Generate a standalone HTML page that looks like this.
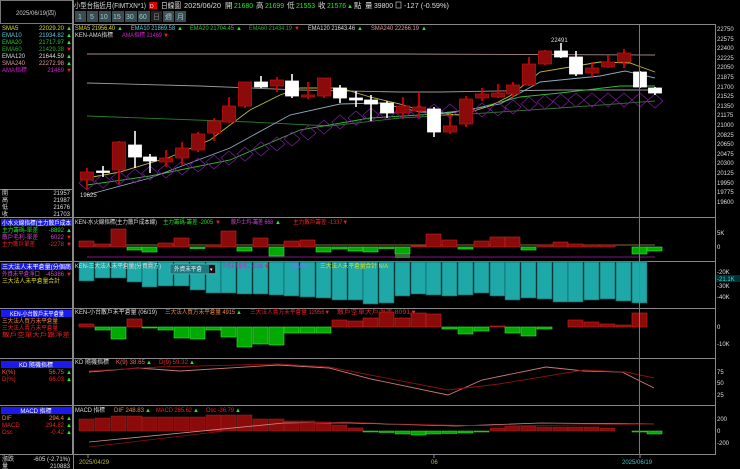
<!DOCTYPE html>
<html><head><meta charset="utf-8"><style>
html,body{margin:0;padding:0;background:#000;width:740px;height:469px;overflow:hidden}
svg{display:block}
text{font-family:"Liberation Sans","Noto Sans CJK TC",sans-serif}
.s{font-size:6px}.m{font-size:7px}.h{font-size:7.5px}
</style></head><body>
<svg width="740" height="469" viewBox="0 0 740 469" xmlns="http://www.w3.org/2000/svg">
<rect width="740" height="469" fill="#000"/>
<!-- top header -->
<rect x="0.5" y="0.5" width="72" height="23" fill="none" stroke="#777"/>
<text x="36" y="15" class="s" fill="#ccc" text-anchor="middle">2025/06/19(四)</text>
<g lengthAdjust="spacingAndGlyphs">
<text x="74" y="8" class="h" fill="#ddd" textLength="72" lengthAdjust="spacingAndGlyphs">小型台指近月(FIMTXN*1)</text>
<rect x="149" y="2" width="8" height="7" fill="#d00"/><text x="150" y="8" style="font-size:5px" fill="#fff">D</text>
<text x="161" y="8" class="h" fill="#ddd" textLength="20" lengthAdjust="spacingAndGlyphs">日線圖</text>
<text x="184" y="8" class="h" fill="#ddd" textLength="37" lengthAdjust="spacingAndGlyphs">2025/06/20</text>
<text x="225" y="8" class="h" fill="#ddd">開</text><text x="234" y="8" class="h" fill="#2e2" textLength="19" lengthAdjust="spacingAndGlyphs">21680</text>
<text x="256" y="8" class="h" fill="#ddd">高</text><text x="265" y="8" class="h" fill="#2e2" textLength="19" lengthAdjust="spacingAndGlyphs">21699</text>
<text x="287" y="8" class="h" fill="#ddd">低</text><text x="296" y="8" class="h" fill="#2e2" textLength="19" lengthAdjust="spacingAndGlyphs">21553</text>
<text x="318" y="8" class="h" fill="#ddd">收</text><text x="327" y="8" class="h" fill="#2e2" textLength="19" lengthAdjust="spacingAndGlyphs">21576</text>
<text x="347" y="8" class="s" fill="#2e2">▲</text>
<text x="354" y="8" class="h" fill="#ddd">點</text>
<text x="365" y="8" class="h" fill="#ddd">量</text><text x="374" y="8" class="h" fill="#ddd" textLength="19" lengthAdjust="spacingAndGlyphs">39800</text>
<rect x="396" y="2" width="5" height="6" fill="none" stroke="#ddd" stroke-width="0.6"/>
<text x="404" y="8" class="h" fill="#ddd" textLength="45" lengthAdjust="spacingAndGlyphs">-127 (-0.59%)</text>
</g>
<g class="m" fill="#9cc">
<rect x="75" y="11" width="11" height="11" fill="#3b4b52"/><text x="78" y="19">1</text>
<rect x="87" y="11" width="11" height="11" fill="#3b4b52"/><text x="90" y="19">5</text>
<rect x="99" y="11" width="12" height="11" fill="#3b4b52"/><text x="100" y="19">10</text>
<rect x="112" y="11" width="12" height="11" fill="#3b4b52"/><text x="113" y="19">15</text>
<rect x="125" y="11" width="12" height="11" fill="#3b4b52"/><text x="126" y="19">30</text>
<rect x="138" y="11" width="12" height="11" fill="#3b4b52"/><text x="139" y="19">60</text>
<rect x="151" y="11" width="11" height="11" fill="#222"/><text x="153" y="19" fill="#888">日</text>
<rect x="163" y="11" width="11" height="11" fill="#3b4b52"/><text x="165" y="19">週</text>
<rect x="175" y="11" width="11" height="11" fill="#3b4b52"/><text x="177" y="19">月</text>
</g>
<!-- frame lines -->
<g stroke="#888" stroke-width="1">
<line x1="73" y1="24.5" x2="715" y2="24.5"/>
<line x1="0" y1="217.5" x2="715" y2="217.5"/>
<line x1="0" y1="261.5" x2="715" y2="261.5"/>
<line x1="0" y1="308.5" x2="715" y2="308.5"/>
<line x1="0" y1="358.5" x2="715" y2="358.5"/>
<line x1="0" y1="405.5" x2="715" y2="405.5"/>
<line x1="0" y1="454.5" x2="715" y2="454.5"/>
<line x1="73.5" y1="0" x2="73.5" y2="469"/>
<line x1="715.5" y1="24" x2="715.5" y2="455"/>
<line x1="72.5" y1="0" x2="72.5" y2="455"/>
<line x1="0" y1="189.5" x2="72" y2="189.5"/>
</g>
<!-- left panel values -->
<g class="s">
<text x="2" y="30" fill="#dd2">SMA5</text><text x="64" y="30" fill="#dd2" text-anchor="end">22029.20</text><text x="66" y="30" fill="#2e2">▲</text>
<text x="2" y="37" fill="#5cd">EMA10</text><text x="64" y="37" fill="#5cd" text-anchor="end">21934.82</text><text x="66" y="37" fill="#2e2">▲</text>
<text x="2" y="44" fill="#2c2">EMA20</text><text x="64" y="44" fill="#2c2" text-anchor="end">21717.97</text><text x="66" y="44" fill="#2e2">▲</text>
<text x="2" y="51" fill="#2a2">EMA60</text><text x="64" y="51" fill="#2a2" text-anchor="end">21429.38</text><text x="66" y="51" fill="#e22">▼</text>
<text x="2" y="58" fill="#ddd">EMA120</text><text x="64" y="58" fill="#ddd" text-anchor="end">21644.59</text><text x="66" y="58" fill="#2e2">▲</text>
<text x="2" y="65" fill="#d99">SMA240</text><text x="64" y="65" fill="#d99" text-anchor="end">22272.98</text><text x="66" y="65" fill="#2e2">▲</text>
<text x="2" y="72" fill="#c2c">AMA指標</text><text x="64" y="72" fill="#c2c" text-anchor="end">21469</text><text x="66" y="72" fill="#e22">▼</text>
<g fill="#ddd"><text x="2" y="195">開</text><text x="70" y="195" text-anchor="end">21957</text>
<text x="2" y="202">高</text><text x="70" y="202" text-anchor="end">21987</text>
<text x="2" y="209">低</text><text x="70" y="209" text-anchor="end">21676</text>
<text x="2" y="216">收</text><text x="70" y="216" text-anchor="end">21703</text></g>
<rect x="1" y="219" width="71" height="7" fill="#1a1aee"/><text x="2" y="225" fill="#fff" textLength="69" lengthAdjust="spacingAndGlyphs">小水火線指標(主力散戶成本</text>
<text x="2" y="232" fill="#2d2" textLength="36" lengthAdjust="spacingAndGlyphs">主力籌碼-單差</text><text x="64" y="232" fill="#2d2" text-anchor="end">-8892</text><text x="66" y="232" fill="#2e2">▲</text>
<text x="2" y="239" fill="#c4c" textLength="36" lengthAdjust="spacingAndGlyphs">散戶毛利-單差</text><text x="64" y="239" fill="#c4c" text-anchor="end">6022</text><text x="66" y="239" fill="#e22">▼</text>
<text x="2" y="246" fill="#e22" textLength="33" lengthAdjust="spacingAndGlyphs">主力散戶單差</text><text x="64" y="246" fill="#e22" text-anchor="end">-2278</text><text x="66" y="246" fill="#e22">▼</text>
<rect x="1" y="263" width="71" height="7" fill="#1a1aee"/><text x="2" y="269" fill="#fff" textLength="69" lengthAdjust="spacingAndGlyphs">三大法人未平倉量(分個商</text>
<text x="2" y="276" fill="#c4c" textLength="38" lengthAdjust="spacingAndGlyphs">外資未平倉淨口</text><text x="64" y="276" fill="#c4c" text-anchor="end">-45386</text><text x="66" y="276" fill="#e22">▼</text>
<text x="2" y="283" fill="#dd2" textLength="58" lengthAdjust="spacingAndGlyphs">三大法人未平倉量合計</text>
<rect x="1" y="310" width="71" height="7" fill="#1a1aee"/><text x="10" y="316" fill="#fff" textLength="54" lengthAdjust="spacingAndGlyphs">KEN-小台散戶未平倉量</text>
<text x="2" y="323" fill="#e84" textLength="56" lengthAdjust="spacingAndGlyphs">三大法人買方未平倉量</text>
<text x="2" y="330" fill="#e22" textLength="56" lengthAdjust="spacingAndGlyphs">三大法人賣方未平倉量</text>
<text x="2" y="337" fill="#e22" textLength="68" lengthAdjust="spacingAndGlyphs">散戶空單大戶跟淨差</text>
<rect x="1" y="361" width="71" height="7" fill="#1a1aee"/><text x="36" y="367" fill="#fff" text-anchor="middle">KD 隨機指標</text>
<text x="2" y="374" fill="#e55">K(%)</text><text x="64" y="374" fill="#e55" text-anchor="end">56.75</text><text x="66" y="374" fill="#2e2">▲</text>
<text x="2" y="381" fill="#e22">D(%)</text><text x="64" y="381" fill="#e22" text-anchor="end">66.03</text><text x="66" y="381" fill="#2e2">▲</text>
<rect x="1" y="407" width="71" height="7" fill="#1a1aee"/><text x="36" y="413" fill="#fff" text-anchor="middle">MACD 指標</text>
<text x="2" y="420" fill="#e84">DIF</text><text x="64" y="420" fill="#e84" text-anchor="end">294.4</text><text x="66" y="420" fill="#2e2">▲</text>
<text x="2" y="427" fill="#e22">MACD</text><text x="64" y="427" fill="#e22" text-anchor="end">294.82</text><text x="66" y="427" fill="#2e2">▲</text>
<text x="2" y="434" fill="#e22">Osc</text><text x="64" y="434" fill="#e22" text-anchor="end">-0.42</text><text x="66" y="434" fill="#2e2">▲</text>
<text x="2" y="461" fill="#ddd">漲跌</text><text x="70" y="461" fill="#ddd" text-anchor="end">-605 (-2.71%)</text>
<text x="2" y="468" fill="#ddd">量</text><text x="70" y="468" fill="#ddd" text-anchor="end">210883</text>
</g>
<!-- main chart titles -->
<g class="s">
<text x="75" y="30" fill="#dd2" textLength="40" lengthAdjust="spacingAndGlyphs">SMA5 21956.40</text><text x="117" y="30" fill="#2e2">▲</text>
<text x="131" y="30" fill="#5cd" textLength="44" lengthAdjust="spacingAndGlyphs">EMA10 21869.58</text><text x="177" y="30" fill="#2e2">▲</text>
<text x="190" y="30" fill="#2c2" textLength="44" lengthAdjust="spacingAndGlyphs">EMA20 21704.45</text><text x="236" y="30" fill="#2e2">▲</text>
<text x="249" y="30" fill="#2a2" textLength="43" lengthAdjust="spacingAndGlyphs">EMA60 21434.19</text><text x="294" y="30" fill="#e22">▼</text>
<text x="308" y="30" fill="#ddd" textLength="47" lengthAdjust="spacingAndGlyphs">EMA120 21643.46</text><text x="357" y="30" fill="#2e2">▲</text>
<text x="371" y="30" fill="#d99" textLength="48" lengthAdjust="spacingAndGlyphs">SMA240 22266.19</text><text x="421" y="30" fill="#2e2">▲</text>
<text x="75" y="37" fill="#ddd" textLength="38" lengthAdjust="spacingAndGlyphs">KEN-AMA指標</text>
<text x="122" y="37" fill="#c2c" textLength="40" lengthAdjust="spacingAndGlyphs">AMA指標 21469</text><text x="163" y="37" fill="#e22">▼</text>
</g>
<!-- price axis -->
<g class="s" fill="#ddd">
<text x="717" y="31">22750</text><text x="717" y="41">22575</text><text x="717" y="50">22400</text><text x="717" y="60">22225</text><text x="717" y="69">22050</text><text x="717" y="79">21875</text><text x="717" y="89">21700</text><text x="717" y="98">21525</text><text x="717" y="108">21350</text><text x="717" y="117">21175</text><text x="717" y="127">21000</text><text x="717" y="137">20825</text><text x="717" y="146">20650</text><text x="717" y="156">20475</text><text x="717" y="165">20300</text><text x="717" y="175">20125</text><text x="717" y="185">19950</text><text x="717" y="194">19775</text><text x="717" y="204">19600</text>
<text x="717" y="235">5K</text><text x="717" y="249">0</text>
<text x="717" y="274">-20K</text>
<text x="717" y="288">-30K</text><text x="717" y="299">-40K</text>
<text x="717" y="329">0</text><text x="717" y="346">-10K</text>
<text x="717" y="374">75</text><text x="717" y="385">50</text><text x="717" y="397">25</text>
<text x="717" y="421">200</text><text x="717" y="433">0</text><text x="717" y="445">-200</text>
</g>
<rect x="716" y="275" width="24" height="7" fill="#033"/><text x="717" y="281" class="s" fill="#3dd">-21.1K</text>
<!-- MA lines -->
<g fill="none" stroke-width="0.9">
<polyline stroke="#a88" points="87,54 300,54 400,54 655,55"/>
<polyline stroke="#999" points="87,83 200,86 300,90 400,92 440,92 560,90 655,90"/>
<polyline stroke="#2a7a2a" points="87,116 250,122 330,126 400,118 470,114 560,108 655,101"/>
<polyline stroke="#3b3" points="87,185 150,176 230,160 300,130 370,118 420,115 470,110 520,97 560,93 620,86 655,86"/>
<polyline stroke="#8ab" points="87,195 150,178 230,148 290,115 340,104 380,103 420,112 450,113 500,104 540,82 600,76 625,71 655,78"/>
<polyline stroke="#bb3" points="87,178 120,172 170,157 210,140 250,110 280,95 300,88 340,88 370,97 400,104 430,113 460,115 490,106 510,96 540,72 570,67 600,62 630,63 655,72"/>
</g>
<!-- AMA diamonds -->
<g fill="none" stroke="#7a1a9a" stroke-width="0.8">
<path d="M79,183 l8,-7 l8,7 l-8,7z M95,181 l8,-7 l8,7 l-8,7z M111,178 l8,-7 l8,7 l-8,7z M127,176 l8,-7 l8,7 l-8,7z M142,173 l8,-7 l8,7 l-8,7z M158,171 l8,-7 l8,7 l-8,7z M174,168 l8,-7 l8,7 l-8,7z M190,165 l8,-7 l8,7 l-8,7z M206,162 l8,-7 l8,7 l-8,7z M221,158 l8,-7 l8,7 l-8,7z M237,154 l8,-7 l8,7 l-8,7z M253,149 l8,-7 l8,7 l-8,7z M269,144 l8,-7 l8,7 l-8,7z M284,139 l8,-7 l8,7 l-8,7z M300,133 l8,-7 l8,7 l-8,7z M316,127 l8,-7 l8,7 l-8,7z M332,122 l8,-7 l8,7 l-8,7z M348,118 l8,-7 l8,7 l-8,7z M363,115 l8,-7 l8,7 l-8,7z M379,113 l8,-7 l8,7 l-8,7z M395,112 l8,-7 l8,7 l-8,7z M411,112 l8,-7 l8,7 l-8,7z M426,111 l8,-7 l8,7 l-8,7z M442,111 l8,-7 l8,7 l-8,7z M458,111 l8,-7 l8,7 l-8,7z M474,110 l8,-7 l8,7 l-8,7z M490,109 l8,-7 l8,7 l-8,7z M505,107 l8,-7 l8,7 l-8,7z M521,104 l8,-7 l8,7 l-8,7z M537,102 l8,-7 l8,7 l-8,7z M553,101 l8,-7 l8,7 l-8,7z M568,100 l8,-7 l8,7 l-8,7z M584,100 l8,-7 l8,7 l-8,7z M600,100 l8,-7 l8,7 l-8,7z M616,100 l8,-7 l8,7 l-8,7z M632,100 l8,-7 l8,7 l-8,7z M647,101 l8,-7 l8,7 l-8,7z"/>
</g>
<!-- candles: wicks -->
<g stroke-width="1.6">
<line x1="87" y1="168" x2="87" y2="189" stroke="#e00"/>
<line x1="103" y1="166" x2="103" y2="177" stroke="#fff"/>
<line x1="119" y1="141" x2="119" y2="184" stroke="#e00"/>
<line x1="135" y1="131" x2="135" y2="168" stroke="#fff"/>
<line x1="150" y1="154" x2="150" y2="173" stroke="#fff"/>
<line x1="166" y1="150" x2="166" y2="167" stroke="#e00"/>
<line x1="182" y1="142" x2="182" y2="166" stroke="#e00"/>
<line x1="198" y1="132" x2="198" y2="152" stroke="#e00"/>
<line x1="214" y1="118" x2="214" y2="141" stroke="#e00"/>
<line x1="229" y1="97" x2="229" y2="123" stroke="#e00"/>
<line x1="245" y1="82" x2="245" y2="108" stroke="#e00"/>
<line x1="261" y1="76" x2="261" y2="88" stroke="#fff"/>
<line x1="277" y1="77" x2="277" y2="92" stroke="#e00"/>
<line x1="292" y1="74" x2="292" y2="98" stroke="#fff"/>
<line x1="308" y1="82" x2="308" y2="99" stroke="#e00"/>
<line x1="324" y1="78" x2="324" y2="98" stroke="#e00"/>
<line x1="340" y1="85" x2="340" y2="103" stroke="#fff"/>
<line x1="356" y1="91" x2="356" y2="107" stroke="#fff"/>
<line x1="371" y1="95" x2="371" y2="121" stroke="#fff"/>
<line x1="387" y1="101" x2="387" y2="118" stroke="#fff"/>
<line x1="403" y1="97" x2="403" y2="118" stroke="#e00"/>
<line x1="419" y1="92" x2="419" y2="117" stroke="#e00"/>
<line x1="434" y1="107" x2="434" y2="137" stroke="#fff"/>
<line x1="450" y1="114" x2="450" y2="134" stroke="#e00"/>
<line x1="466" y1="96" x2="466" y2="127" stroke="#e00"/>
<line x1="482" y1="88" x2="482" y2="101" stroke="#e00"/>
<line x1="498" y1="84" x2="498" y2="98" stroke="#e00"/>
<line x1="513" y1="82" x2="513" y2="97" stroke="#e00"/>
<line x1="529" y1="57" x2="529" y2="86" stroke="#e00"/>
<line x1="545" y1="50" x2="545" y2="65" stroke="#e00"/>
<line x1="561" y1="43" x2="561" y2="58" stroke="#fff"/>
<line x1="576" y1="51" x2="576" y2="76" stroke="#fff"/>
<line x1="592" y1="62" x2="592" y2="78" stroke="#e00"/>
<line x1="608" y1="55" x2="608" y2="68" stroke="#e00"/>
<line x1="624" y1="49" x2="624" y2="68" stroke="#e00"/>
<line x1="640" y1="71" x2="640" y2="88" stroke="#fff"/>
<line x1="655" y1="87" x2="655" y2="95" stroke="#fff"/>
</g>
<!-- candle bodies -->
<g stroke-width="0.8">
<g fill="#8b0a0a" stroke="#c01010">
<rect x="80.5" y="172" width="13" height="8"/>
<rect x="112.5" y="142" width="13" height="28"/>
<rect x="159.5" y="158" width="13" height="4"/>
<rect x="175.5" y="148" width="13" height="10"/>
<rect x="191.5" y="134" width="13" height="16"/>
<rect x="207.5" y="121" width="13" height="12"/>
<rect x="222.5" y="106" width="13" height="16"/>
<rect x="238.5" y="82" width="13" height="24"/>
<rect x="270.5" y="80" width="13" height="6"/>
<rect x="301.5" y="95" width="13" height="2"/>
<rect x="317.5" y="78" width="13" height="18"/>
<rect x="396.5" y="106" width="13" height="7"/>
<rect x="412.5" y="107" width="13" height="4"/>
<rect x="443.5" y="126" width="13" height="6"/>
<rect x="459.5" y="99" width="13" height="25"/>
<rect x="475.5" y="94" width="13" height="4"/>
<rect x="491.5" y="93" width="13" height="4"/>
<rect x="506.5" y="85" width="13" height="9"/>
<rect x="522.5" y="64" width="13" height="21"/>
<rect x="538.5" y="51" width="13" height="13"/>
<rect x="585.5" y="68" width="13" height="5"/>
<rect x="601.5" y="62" width="13" height="5"/>
<rect x="617.5" y="53" width="13" height="9"/>
</g>
<g fill="#fff" stroke="#fff">
<rect x="96.5" y="171" width="13" height="1.5"/>
<rect x="128.5" y="145" width="13" height="12"/>
<rect x="143.5" y="157" width="13" height="4"/>
<rect x="254.5" y="82" width="13" height="5"/>
<rect x="285.5" y="81" width="13" height="15"/>
<rect x="333.5" y="88" width="13" height="10"/>
<rect x="349.5" y="98" width="13" height="2"/>
<rect x="364.5" y="100" width="13" height="4"/>
<rect x="380.5" y="103" width="13" height="10"/>
<rect x="427.5" y="109" width="13" height="23"/>
<rect x="554.5" y="51" width="13" height="6"/>
<rect x="569.5" y="57" width="13" height="17"/>
<rect x="633.5" y="72" width="13" height="15"/>
<rect x="648.5" y="88" width="13" height="5"/>
</g>
</g>
<text x="80" y="197" class="s" fill="#ddd">19625</text>
<text x="551" y="42" class="s" fill="#ddd">22491</text>

<!-- panel 1: water fire -->
<g class="s">
<text x="75" y="224" fill="#ddd" textLength="82" lengthAdjust="spacingAndGlyphs">KEN-水火線指標(主力散戶成本線)</text>
<text x="163" y="224" fill="#2d2" textLength="50" lengthAdjust="spacingAndGlyphs">主力籌碼-籌差 -2005</text><text x="215" y="224" fill="#e22">▼</text>
<text x="231" y="224" fill="#c4c" textLength="42" lengthAdjust="spacingAndGlyphs">散戶土均-籌差 668</text><text x="275" y="224" fill="#2e2">▲</text>
<text x="293" y="224" fill="#e22" textLength="55" lengthAdjust="spacingAndGlyphs">主力散戶籌差 -1337▼</text>
</g>
<line x1="87" y1="245" x2="655" y2="245" stroke="#b84" stroke-width="0.8"/>
<line x1="87" y1="257" x2="655" y2="257" stroke="#a2a" stroke-width="0.8"/>
<g stroke-width="0.6">
<g fill="#8b0a0a" stroke="#c22">
<rect x="79" y="241" width="15" height="6"/><rect x="95" y="244" width="15" height="3"/><rect x="111" y="229" width="15" height="18"/>
<rect x="158" y="243" width="15" height="4"/><rect x="174" y="238" width="15" height="9"/><rect x="206" y="245" width="15" height="2"/>
<rect x="221" y="231" width="15" height="16"/><rect x="253" y="238" width="15" height="9"/><rect x="284" y="241" width="15" height="6"/>
<rect x="300" y="240" width="15" height="7"/><rect x="411" y="246" width="15" height="1"/><rect x="426" y="234" width="15" height="13"/>
<rect x="442" y="240" width="15" height="7"/><rect x="474" y="241" width="15" height="6"/><rect x="490" y="237" width="15" height="10"/>
<rect x="505" y="237" width="15" height="10"/><rect x="537" y="245" width="15" height="2"/><rect x="553" y="242" width="15" height="5"/>
<rect x="568" y="244" width="15" height="3"/><rect x="584" y="245" width="15" height="2"/><rect x="600" y="245" width="15" height="2"/>
</g>
<g fill="#0a0" stroke="#3e3">
<rect x="127" y="247" width="15" height="3"/><rect x="142" y="247" width="15" height="5"/><rect x="190" y="247" width="15" height="1.5"/>
<rect x="237" y="247" width="15" height="4"/><rect x="269" y="247" width="15" height="9"/><rect x="316" y="247" width="15" height="5"/>
<rect x="332" y="247" width="15" height="2"/><rect x="348" y="247" width="15" height="4"/><rect x="363" y="247" width="15" height="5"/>
<rect x="379" y="247" width="15" height="1.5"/><rect x="395" y="247" width="15" height="7"/><rect x="458" y="247" width="15" height="2"/>
<rect x="521" y="247" width="15" height="3"/><rect x="632" y="247" width="15" height="7"/><rect x="647" y="247" width="15" height="4"/>
</g>
<rect x="395" y="254" width="15" height="4" fill="#3a6a3a" stroke="none"/>
</g>

<!-- panel 2: teal -->
<g fill="#1fa8a8" stroke="#0c5c5c" stroke-width="0.6">
<rect x="79" y="262" width="15" height="19"/><rect x="95" y="262" width="15" height="16"/><rect x="111" y="262" width="15" height="16"/>
<rect x="127" y="262" width="15" height="20"/><rect x="142" y="262" width="15" height="25"/><rect x="158" y="262" width="15" height="24"/>
<rect x="174" y="262" width="15" height="24"/><rect x="190" y="262" width="15" height="28"/><rect x="206" y="262" width="15" height="31"/>
<rect x="221" y="262" width="15" height="31"/><rect x="237" y="262" width="15" height="32"/><rect x="253" y="262" width="15" height="32"/>
<rect x="269" y="262" width="15" height="33"/><rect x="284" y="262" width="15" height="34"/><rect x="300" y="262" width="15" height="35"/>
<rect x="316" y="262" width="15" height="36"/><rect x="332" y="262" width="15" height="38"/><rect x="348" y="262" width="15" height="38"/>
<rect x="363" y="262" width="15" height="42"/><rect x="379" y="262" width="15" height="41"/><rect x="395" y="262" width="15" height="34"/>
<rect x="411" y="262" width="15" height="32"/><rect x="426" y="262" width="15" height="33"/><rect x="442" y="262" width="15" height="34"/>
<rect x="458" y="262" width="15" height="33"/><rect x="474" y="262" width="15" height="31"/><rect x="490" y="262" width="15" height="34"/>
<rect x="505" y="262" width="15" height="38"/><rect x="521" y="262" width="15" height="36"/><rect x="537" y="262" width="15" height="37"/>
<rect x="553" y="262" width="15" height="40"/><rect x="568" y="262" width="15" height="40"/><rect x="584" y="262" width="15" height="38"/>
<rect x="600" y="262" width="15" height="37"/><rect x="616" y="262" width="15" height="39"/><rect x="632" y="262" width="15" height="41"/>
</g>
<g class="s">
<text x="75" y="268" fill="#ddd" textLength="86" lengthAdjust="spacingAndGlyphs">KEN-三大法人未平倉量(分買賣方)</text>
<rect x="170" y="264" width="46" height="10" fill="#1a7a80" stroke="#4aa"/>
<text x="174" y="271" fill="#eee" textLength="28" lengthAdjust="spacingAndGlyphs">外資未平倉</text>
<rect x="209" y="265" width="6" height="8" fill="#111"/><text x="210" y="271" fill="#fff" style="font-size:5px">▾</text>
<text x="223" y="268" fill="#c2c" textLength="40" lengthAdjust="spacingAndGlyphs">外資未平倉淨口 -45386</text><text x="264" y="268" fill="#e22">▼</text>
<text x="291" y="268" fill="#77f" textLength="18" lengthAdjust="spacingAndGlyphs">(N/A)</text>
<text x="320" y="268" fill="#dd2" textLength="68" lengthAdjust="spacingAndGlyphs">三大法人未平倉量合計 N/A</text>
</g>

<!-- panel 3 -->
<g class="s">
<text x="75" y="314" fill="#ddd" textLength="82" lengthAdjust="spacingAndGlyphs">KEN-小台散戶未平倉量 (06/19)</text>
<text x="165" y="314" fill="#e84" textLength="70" lengthAdjust="spacingAndGlyphs">三大法人買方未平倉量 4915</text><text x="236" y="314" fill="#2e2">▲</text>
<text x="250" y="314" fill="#e22" textLength="80" lengthAdjust="spacingAndGlyphs">三大法人賣方未平倉量 12956▼</text>
<text x="337" y="314" fill="#e22" textLength="80" lengthAdjust="spacingAndGlyphs">散戶空單大戶淨差 8091▼</text>
</g>
<g stroke-width="0.6">
<g fill="#8b0a0a" stroke="#c22">
<rect x="79" y="324" width="15" height="3"/><rect x="127" y="319" width="15" height="8"/>
<rect x="332" y="320" width="15" height="7"/><rect x="348" y="321" width="15" height="6"/><rect x="363" y="318" width="15" height="9"/>
<rect x="379" y="312" width="15" height="15"/><rect x="395" y="318" width="15" height="9"/><rect x="411" y="313" width="15" height="14"/>
<rect x="426" y="314" width="15" height="13"/><rect x="490" y="326" width="15" height="1"/>
<rect x="568" y="320" width="15" height="7"/><rect x="584" y="322" width="15" height="5"/><rect x="600" y="324" width="15" height="3"/>
<rect x="616" y="325" width="15" height="2"/><rect x="632" y="313" width="15" height="14"/>
</g>
<g fill="#0a0" stroke="#3e3">
<rect x="95" y="327" width="15" height="3"/><rect x="111" y="327" width="15" height="12"/><rect x="142" y="327" width="15" height="1"/>
<rect x="158" y="327" width="15" height="3"/><rect x="174" y="327" width="15" height="11"/><rect x="190" y="327" width="15" height="12"/>
<rect x="206" y="327" width="15" height="3"/><rect x="221" y="327" width="15" height="10"/><rect x="237" y="327" width="15" height="20"/>
<rect x="253" y="327" width="15" height="17"/><rect x="269" y="327" width="15" height="18"/><rect x="284" y="327" width="15" height="6"/>
<rect x="300" y="327" width="15" height="6"/><rect x="316" y="327" width="15" height="6"/><rect x="442" y="327" width="15" height="2"/>
<rect x="458" y="327" width="15" height="7"/><rect x="474" y="327" width="15" height="4"/><rect x="505" y="327" width="15" height="6"/>
<rect x="521" y="327" width="15" height="9"/><rect x="537" y="327" width="15" height="2"/>
</g>
</g>

<!-- KD -->
<g class="s">
<text x="75" y="364" fill="#ddd" textLength="34" lengthAdjust="spacingAndGlyphs">KD 隨機指標</text>
<text x="116" y="364" fill="#e66" textLength="29" lengthAdjust="spacingAndGlyphs">K(9) 38.65</text><text x="146" y="364" fill="#2e2">▲</text>
<text x="159" y="364" fill="#e22" textLength="29" lengthAdjust="spacingAndGlyphs">D(9) 59.32</text><text x="189" y="364" fill="#2e2">▲</text>
</g>
<polyline fill="none" stroke="#c77" stroke-width="0.9" points="89,372 138,368 180,371 278,365 329,368 371,379 448,395 482,380 546,367 584,371 622,372 654,388"/>
<polyline fill="none" stroke="#8b1010" stroke-width="0.9" points="89,371 159,367 278,364 329,367 448,390 499,384 584,370 626,372 654,378"/>

<!-- MACD -->
<g class="s">
<text x="75" y="412" fill="#ddd" textLength="30" lengthAdjust="spacingAndGlyphs">MACD 指標</text>
<text x="114" y="412" fill="#e84" textLength="30" lengthAdjust="spacingAndGlyphs">DIF 248.83</text><text x="145" y="412" fill="#2e2">▲</text>
<text x="156" y="412" fill="#e22" textLength="36" lengthAdjust="spacingAndGlyphs">MACD 285.62</text><text x="193" y="412" fill="#2e2">▲</text>
<text x="206" y="412" fill="#e22" textLength="28" lengthAdjust="spacingAndGlyphs">Osc -36.79</text><text x="235" y="412" fill="#2e2">▲</text>
</g>
<g stroke-width="0.5">
<g fill="#8b0a0a" stroke="#a22">
<rect x="79" y="419" width="15" height="12"/><rect x="95" y="418" width="15" height="13"/><rect x="111" y="416" width="15" height="15"/>
<rect x="127" y="416" width="15" height="15"/><rect x="142" y="417" width="15" height="14"/><rect x="158" y="417" width="15" height="14"/>
<rect x="174" y="417" width="15" height="14"/><rect x="190" y="417" width="15" height="14"/><rect x="206" y="415" width="15" height="16"/>
<rect x="221" y="415" width="15" height="16"/><rect x="237" y="415" width="15" height="16"/><rect x="253" y="419" width="15" height="12"/>
<rect x="269" y="419" width="15" height="12"/><rect x="284" y="421" width="15" height="10"/><rect x="300" y="421" width="15" height="10"/>
<rect x="316" y="422" width="15" height="9"/><rect x="332" y="425" width="15" height="6"/><rect x="348" y="428" width="15" height="3"/>
<rect x="490" y="428" width="15" height="3"/><rect x="505" y="426" width="15" height="5"/><rect x="521" y="426" width="15" height="5"/>
<rect x="537" y="427" width="15" height="4"/><rect x="553" y="427" width="15" height="4"/><rect x="568" y="427" width="15" height="4"/>
<rect x="584" y="427" width="15" height="4"/><rect x="600" y="428" width="15" height="3"/>
</g>
<g fill="#0a0" stroke="#3e3">
<rect x="363" y="431" width="15" height="1"/><rect x="379" y="431" width="15" height="1.5"/><rect x="395" y="431" width="15" height="3"/>
<rect x="411" y="431" width="15" height="4"/><rect x="426" y="431" width="15" height="3"/><rect x="442" y="431" width="15" height="2.5"/>
<rect x="458" y="431" width="15" height="2"/><rect x="474" y="431" width="15" height="1"/><rect x="632" y="431" width="15" height="1"/>
<rect x="647" y="431" width="15" height="3"/>
</g>
</g>
<polyline fill="none" stroke="#c88" stroke-width="0.8" points="89,442 284,423 350,423 456,426 541,423 654,424"/>
<polyline fill="none" stroke="#8b1010" stroke-width="0.8" points="89,447 284,424 346,422 397,424 499,426 654,424"/>

<!-- cursor line -->
<line x1="639.5" y1="25" x2="639.5" y2="455" stroke="#2a9a9a" stroke-width="1"/>

<!-- date axis -->
<g stroke="#888"><line x1="88" y1="455" x2="88" y2="458"/><line x1="434" y1="455" x2="434" y2="458"/><line x1="640" y1="455" x2="640" y2="458"/></g>
<text x="79" y="464" class="s" fill="#bb3">2025/04/29</text>
<text x="431" y="464" class="s" fill="#bb3">06</text>
<text x="622" y="464" class="s" fill="#3cc">2025/06/19</text>
</svg>
</body></html>
